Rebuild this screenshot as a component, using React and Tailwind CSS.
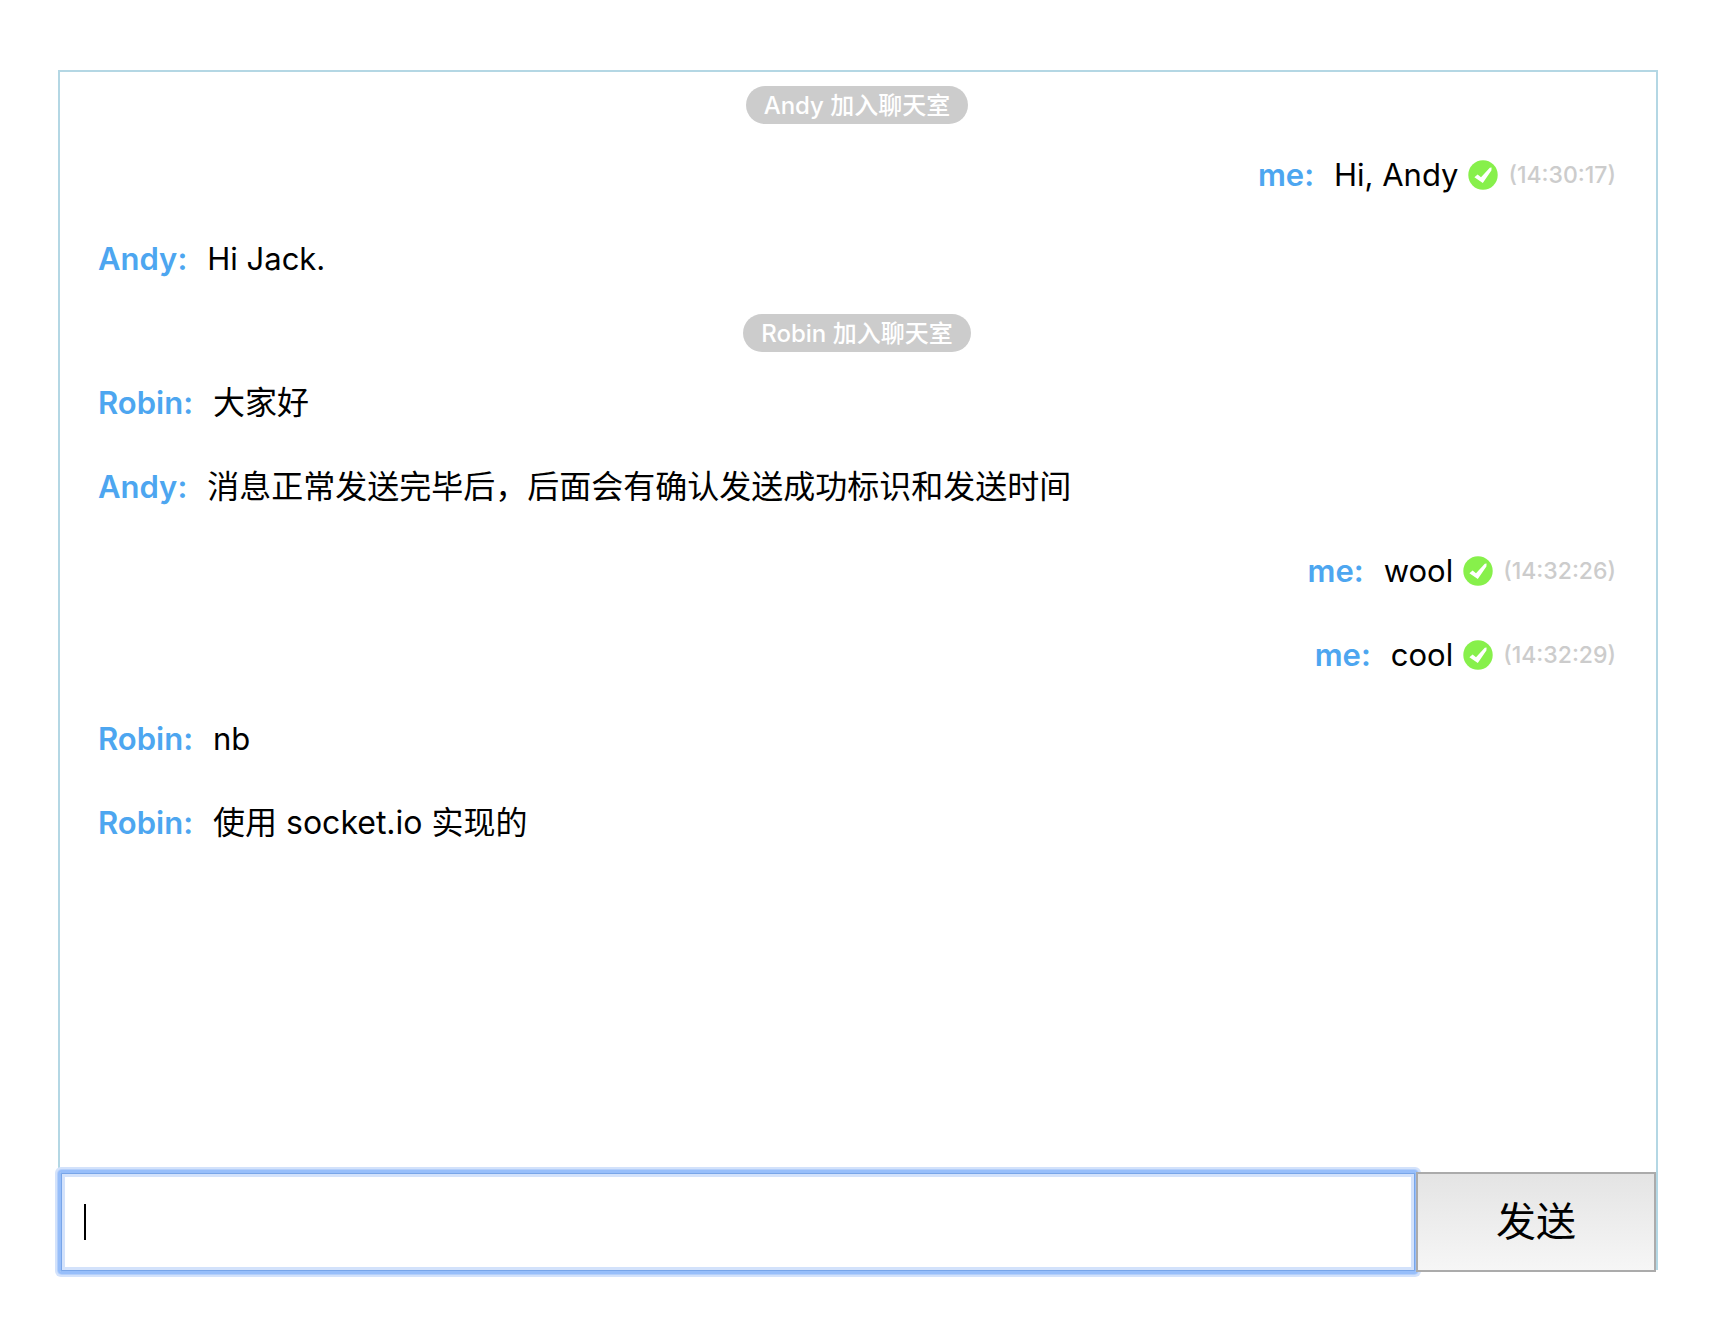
import React from "react";

const entries = [
  { type: "join", name: "Andy" },
  { type: "mine", text: "Hi, Andy", time: "14:30:17" },
  { type: "other", name: "Andy", text: "Hi Jack." },
  { type: "join", name: "Robin" },
  { type: "other", name: "Robin", text: "大家好" },
  { type: "other", name: "Andy", text: "消息正常发送完毕后，后面会有确认发送成功标识和发送时间" },
  { type: "mine", text: "wool", time: "14:32:26" },
  { type: "mine", text: "cool", time: "14:32:29" },
  { type: "other", name: "Robin", text: "nb" },
  { type: "other", name: "Robin", text: "使用 socket.io 实现的" },
];

const hasHan = (text) => /\p{Script=Han}/u.test(text);

function SentIcon() {
  return (
    <svg viewBox="0 0 30 30" className="mx-2.5 size-[30px] shrink-0" role="img" aria-label="已发送">
      <circle cx="15" cy="15" r="14.7" fill="#87f04b" />
      <path d="M6.4 17.2 L9.6 14.4 L13 17.2 L21.8 7.8 L23.6 7.6 L23.4 10.4 L14.8 23 Z" fill="#fff" />
    </svg>
  );
}

function Entry({ entry }) {
  if (entry.type === "join") {
    return (
      <li className="flex justify-center pt-3.5 pb-2">
        <span className="rounded-full bg-[#cccccc] px-[18px] pt-0.5 text-[24px] leading-9 font-medium text-white">
          {entry.name} 加入聊天室
        </span>
      </li>
    );
  }
  const mine = entry.type === "mine";
  return (
    <li className={mine ? "flex min-h-21 items-center justify-end pt-0.5" : "flex min-h-21 items-center pt-0.5"}>
      <span className="mr-5 text-[31px] font-semibold text-[#4da6f0]">{mine ? "me" : entry.name}:</span>
      <span className={hasHan(entry.text) ? "text-[32px]" : "text-[31px]"}>{entry.text}</span>
      {mine && <SentIcon />}
      {mine && <time className="text-[23px] font-medium text-[#cccccc]">({entry.time})</time>}
    </li>
  );
}

export default function App() {
  return (
    <div className="min-h-screen bg-white pt-[70px] pr-[66px] pb-12 pl-[58px] font-['Inter','Noto_Sans_CJK_SC',sans-serif] leading-10 text-black">
      <main className="flex min-h-[1200px] flex-col border-2 border-b-0 border-[#b4d7e4]">
        <ul className="flex-1 pr-10 pl-[38px]">
          {entries.map((entry, i) => (
            <Entry key={i} entry={entry} />
          ))}
        </ul>
        <form className="-mb-0.5 flex h-[100px]" onSubmit={(e) => e.preventDefault()}>
          <div className="relative flex-1">
            <input
              type="text"
              aria-label="消息"
              className="size-full rounded-[2px] bg-white px-6 text-[32px] caret-transparent shadow-[inset_0_0_0_1px_#97befa,inset_0_0_0_2px_#78a5e8,inset_0_0_0_5px_#d3e2fb,0_0_0_2px_#97befa,0_0_0_3px_#b4cffa,0_0_0_5px_#d3e2fb] outline-none"
            />
            <span aria-hidden="true" className="pointer-events-none absolute top-8 left-6 h-9 w-0.5 bg-black" />
          </div>
          <button
            type="submit"
            className="relative w-60 border-2 border-[#ababab] bg-linear-to-b from-[#e4e4e4] to-[#f6f6f6] text-[40px]"
          >
            发送
          </button>
        </form>
      </main>
    </div>
  );
}
